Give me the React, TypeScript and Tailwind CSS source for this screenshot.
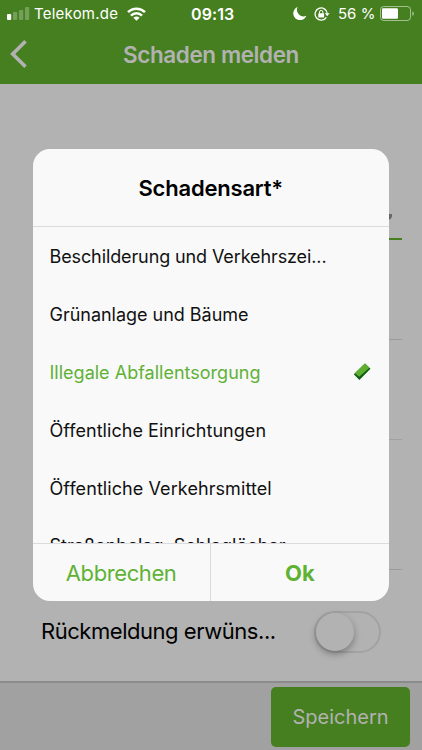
import { useState } from "react";
import clsx from "clsx";

const DAMAGE_TYPES = [
  { label: "Beschilderung und Verkehrszei...", className: "tracking-[-0.11px]" },
  { label: "Grünanlage und Bäume", className: "tracking-[-0.02px]" },
  { label: "Illegale Abfallentsorgung", className: "tracking-[0.01px]" },
  { label: "Öffentliche Einrichtungen", className: "tracking-[0.04px]" },
  { label: "Öffentliche Verkehrsmittel", className: "tracking-[0.08px]" },
  { label: "Straßenbelag, Schlaglöcher", className: "tracking-[0.04px] pb-[2px]" },
];

function StatusBar() {
  return (
    <div className="flex h-[27px] items-center text-white">
      <svg className="ml-[7px] h-[13px] w-[23px]" viewBox="0 0 23 13" fill="currentColor">
        <rect x="0" y="7" width="4.2" height="6" rx="1" />
        <rect x="6" y="5" width="4.2" height="8" rx="1" opacity="0.25" />
        <rect x="12" y="3" width="4.2" height="10" rx="1" opacity="0.25" />
        <rect x="18" y="0" width="4.2" height="13" rx="1" opacity="0.25" />
      </svg>
      <span className="ml-[4px] w-[84px] whitespace-nowrap text-[15px] leading-none tracking-[0.22px]">Telekom.de</span>
      <svg className="ml-[9px] h-[14px] w-[19px]" viewBox="0 0 19 14" fill="none" stroke="currentColor" strokeWidth="2.5">
        <path d="M1 5.2C5.8.5 13.2.5 18 5.2" />
        <path d="M4 8.6c3.1-3.1 7.9-3.1 11 0" />
        <path d="M9.5 13.7 6.4 10.7c1.7-1.5 4.5-1.5 6.2 0z" fill="currentColor" stroke="none" />
      </svg>
      <span className="ml-[45px] w-[46px] whitespace-nowrap text-[16px] font-semibold leading-none tracking-[0.1px]">09:13</span>
      <svg className="ml-[56px] h-[13px] w-[14px]" viewBox="0 0 14 13" fill="currentColor">
        <path d="M4.6 0A6.6 6.6 0 0 0 13.4 8.8 6.8 6.8 0 1 1 4.6 0z" />
      </svg>
      <svg className="ml-[7px] h-[14px] w-[16px]" viewBox="0 0 16 14" fill="none" stroke="currentColor" strokeWidth="1.3">
        <path d="M12.4 10.3A6.1 6.1 0 1 1 13.3 6.5" />
        <path d="M10.8 6.3h4.8l-2.4 3z" fill="currentColor" stroke="none" />
        <rect x="4.3" y="6.2" width="5.8" height="4.2" rx="0.5" fill="currentColor" stroke="none" />
        <path d="M5.5 6.5V5.1a1.7 1.7 0 0 1 3.4 0v1.4" strokeWidth="1" />
      </svg>
      <span className="ml-[8px] w-[38px] whitespace-nowrap text-[15px] leading-none">56 %</span>
      <svg className="ml-[4px] h-[15px] w-[35px]" viewBox="0 0 35 15" fill="none">
        <rect x="0.5" y="0.5" width="30" height="14" rx="3.2" stroke="#fff" strokeOpacity="0.5" />
        <rect x="2" y="2.3" width="16" height="10.4" rx="1.2" fill="#fff" />
        <path d="M32.3 5.2c2.2.9 2.2 3.7 0 4.6z" fill="#fff" fillOpacity="0.5" />
      </svg>
    </div>
  );
}

function NavBar() {
  return (
    <div className="grid h-[57px] grid-cols-[60px_1fr_60px] items-center text-[#b2b2b2]">
      <button aria-label="Zurück">
        <svg className="mb-[3px] ml-[10px] h-[28px] w-[17px]" viewBox="0 0 17 28" fill="none" stroke="currentColor" strokeWidth="3.6">
          <path d="M15.5 1.3 2.7 14l12.8 12.7" />
        </svg>
      </button>
      <h1 className="whitespace-nowrap text-center text-[22.5px] font-semibold leading-none tracking-[-0.43px]">Schaden melden</h1>
    </div>
  );
}

function ReportForm() {
  return (
    <main className="flex h-[597px] flex-col pl-[41px] pr-[20px]">
      <div className="flex h-[156px] items-end justify-end border-b-2 border-[#467f20] pb-[18px] pr-[10px]">
        <svg className="h-[6px] w-[8px]" viewBox="0 0 8 6">
          <path d="M0 0h8v1.5C8 4 6.5 5.5 4 6z" fill="#666" />
        </svg>
      </div>
      <div className="h-[100px] border-b border-[#9b9b9f]" />
      <div className="h-[100px] border-b border-[#a0a0a0]" />
      <div className="h-[130px] border-b border-[#9b9b9b]" />
      <div className="flex flex-1 items-start justify-between pr-[21px] pt-[41px]">
        <span className="whitespace-nowrap pt-[7px] text-[22px] leading-[26px] tracking-[-0.46px] text-black">Rückmeldung erwüns...</span>
        <span role="switch" aria-checked="false" className="flex h-[42px] w-[67px] rounded-full border-2 border-[#a2a2a2]">
          <span className="size-[38px] rounded-full bg-[#b2b2b2] shadow-[0_3px_7px_rgba(0,0,0,0.32)]" />
        </span>
      </div>
    </main>
  );
}

function CheckMark() {
  return (
    <svg className="h-[18px] w-[18px]" viewBox="0 0 18 18">
      <path d="M.8 11.2 12 .4 17.5 5.8 6.4 17z" fill="#0d5d12" />
      <path d="M1.8 10.2 12 .4 16.4 4.8 6.2 13.8z" fill="#5db02e" />
    </svg>
  );
}

function DamageDialog() {
  const [selected, setSelected] = useState(2);

  return (
    <div role="dialog" className="absolute left-[32.5px] top-[149px] flex h-[452px] w-[356.5px] flex-col overflow-hidden rounded-[17px] bg-[#f9f9f9]">
      <div className="flex h-[78px] shrink-0 items-center justify-center border-b border-[#dbdbdf]">
        <h2 className="text-[22px] font-semibold leading-none tracking-[-0.2px] text-black">Schadensart*</h2>
      </div>
      <ul className="h-[316px] shrink-0 overflow-hidden">
        {DAMAGE_TYPES.map((type, i) => (
          <li
            key={type.label}
            onClick={() => setSelected(i)}
            className={clsx(
              "flex h-[58px] items-center justify-between pl-[17px] pr-[18px] text-[18px]",
              type.className,
              i === selected ? "text-[#60b235]" : "text-[#111]"
            )}
          >
            <span className="whitespace-nowrap">{type.label}</span>
            {i === selected && <CheckMark />}
          </li>
        ))}
      </ul>
      <div className="grid flex-1 grid-cols-2 border-t border-[#dbdbdf] text-[22px] text-[#60b235]">
        <button className="border-r border-[#dbdbdf] pt-px tracking-[-0.4px]">Abbrechen</button>
        <button className="pt-px font-bold">Ok</button>
      </div>
    </div>
  );
}

export default function App() {
  return (
    <div className="relative h-[750px] w-[422px] overflow-hidden bg-[#b2b2b2] font-['Inter','Liberation_Sans',sans-serif]">
      <header className="h-[84px] bg-[#467f20]">
        <StatusBar />
        <NavBar />
      </header>
      <ReportForm />
      <footer className="flex h-[69px] justify-end border-t-2 border-[#8b8b8b] bg-[#a1a1a1] pr-[12px] pt-[4px]">
        <button className="h-[60px] w-[139px] rounded-[5px] bg-[#467f20] text-[20px] text-[#b2b2b2]">Speichern</button>
      </footer>
      <DamageDialog />
    </div>
  );
}
